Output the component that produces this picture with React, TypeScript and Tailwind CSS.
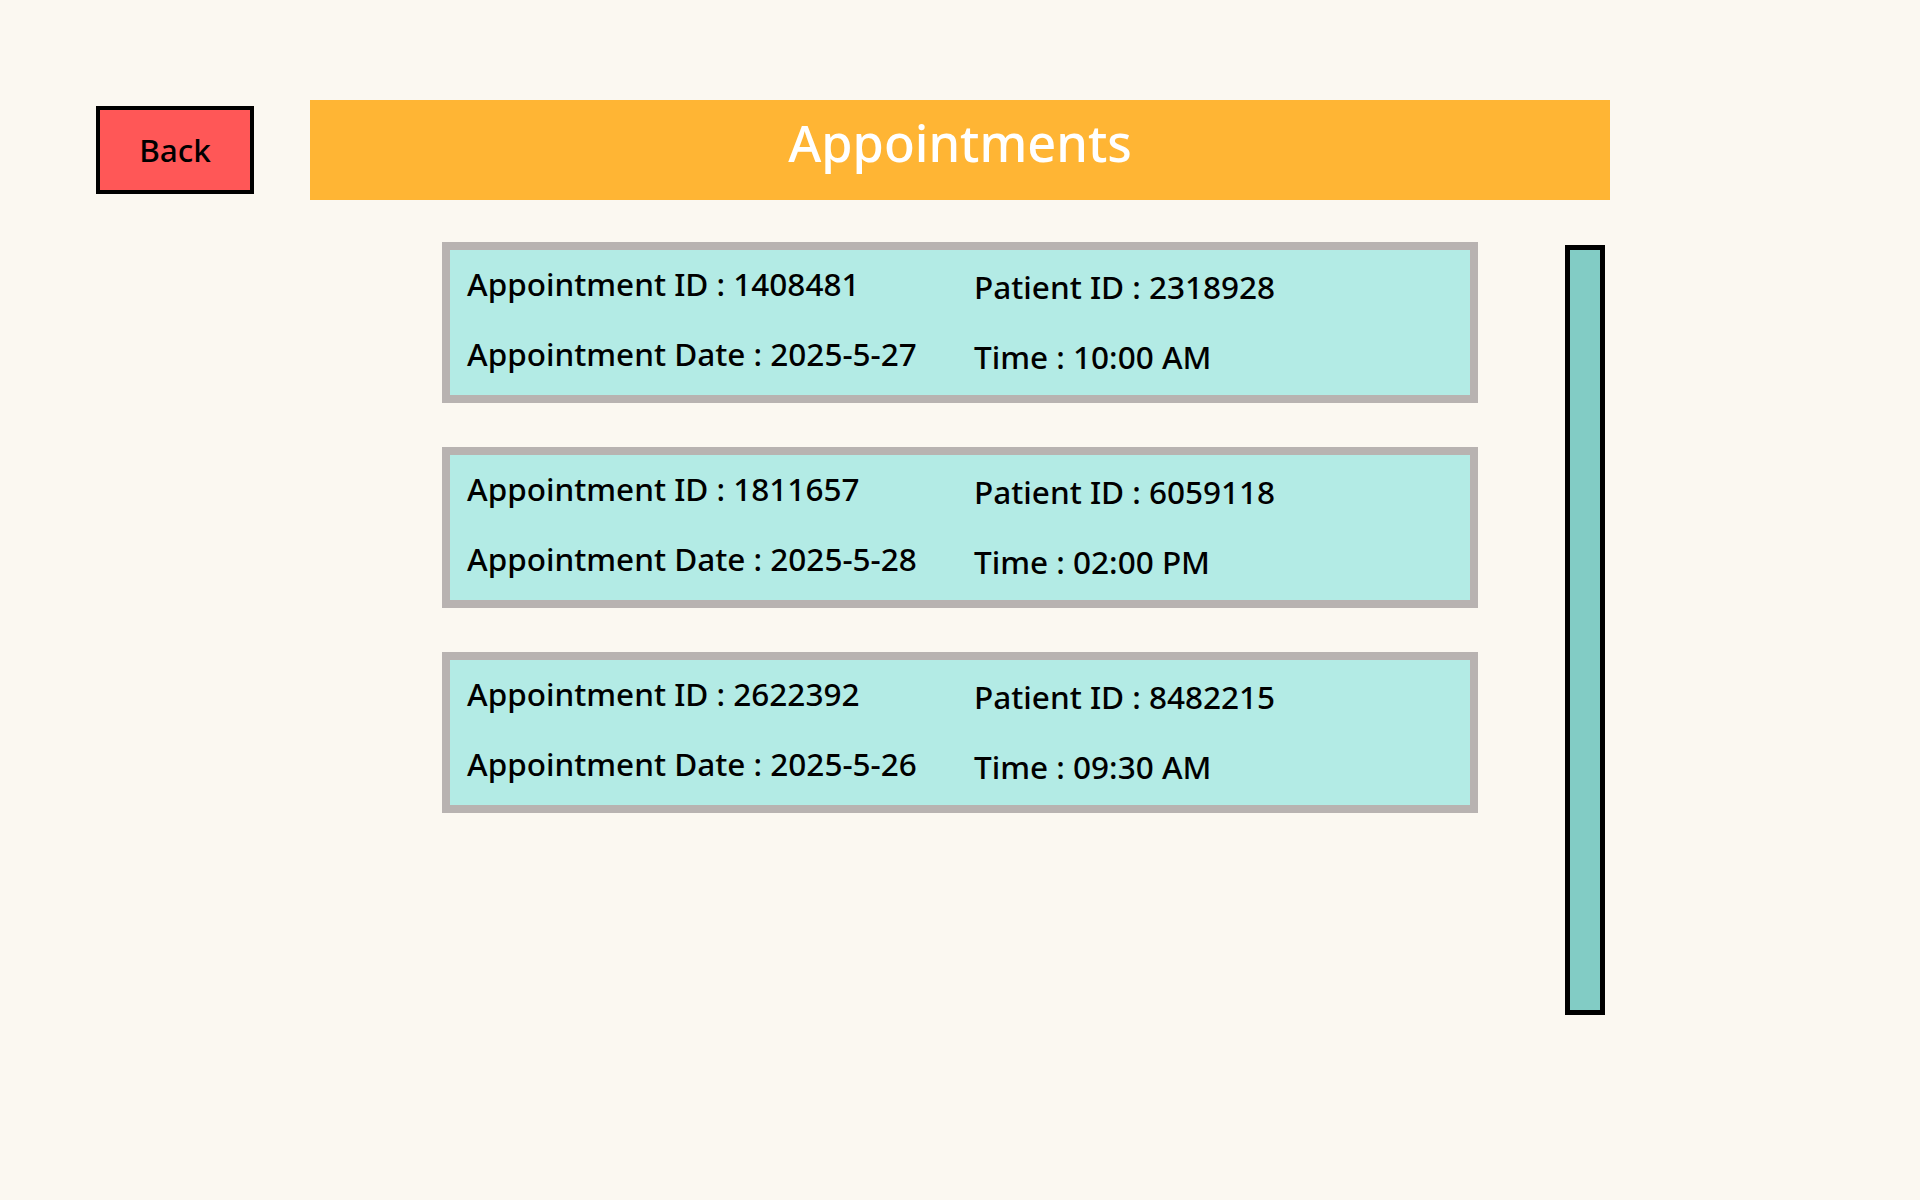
const appointments = [
    {id: 1408481, patientId: 2318928, date: "2025-5-27", time: "10:00 AM"},
    {id: 1811657, patientId: 6059118, date: "2025-5-28", time: "02:00 PM"},
    {id: 2622392, patientId: 8482215, date: "2025-5-26", time: "09:30 AM"},
];

const AppointmentCard = ({item}: { item: typeof appointments[number] }) => {
    return (
        <div className="flex border-8 border-[#b8b3b1] bg-[#b3ebe5] h-[161px] pl-[17px] text-[31.5px] leading-[44px] font-medium text-black">
            {/* left column */}
            <div className="flex flex-col gap-[26px] pt-[12px] w-[507px]">
                <p>Appointment ID : {item.id}</p>
                <p>Appointment Date : {item.date}</p>
            </div>
            {/* right column */}
            <div className="flex flex-col gap-[26px] pt-[15px]">
                <p>Patient ID : {item.patientId}</p>
                <p>Time : {item.time}</p>
            </div>
        </div>
    );
};

export default function App() {
    const handleBack = () => {
        window.history.back();
    };

    return (
        <div
            className="min-h-screen bg-[#fbf8f1] flex items-start pl-[96px] pt-[100px]"
            style={{fontFamily: '"Noto Sans", "Open Sans", sans-serif'}}
        >
            <button
                onClick={handleBack}
                className="mt-[6px] w-[158px] h-[88px] border-4 border-black bg-[#ff5757] text-[31.5px] font-medium text-black flex items-center justify-center select-none"
            >
                Back
            </button>

            <div className="ml-[56px] w-[1300px] flex flex-col">
                <div className="h-[100px] bg-[#ffb534] flex justify-center pt-[5px]">
                    <h1 className="text-[50.5px] leading-normal font-medium text-white">Appointments</h1>
                </div>

                <div className="flex items-start mt-[42px] pl-[132px]">
                    <div className="w-[1036px] flex flex-col gap-[44px]">
                        {appointments.map((item) => (
                            <AppointmentCard key={item.id} item={item}/>
                        ))}
                    </div>

                    {/* scroll track */}
                    <div className="ml-[87px] mt-[3px] w-[40px] h-[770px] border-[5px] border-black bg-[#82ccc5]"/>
                </div>
            </div>
        </div>
    );
}
